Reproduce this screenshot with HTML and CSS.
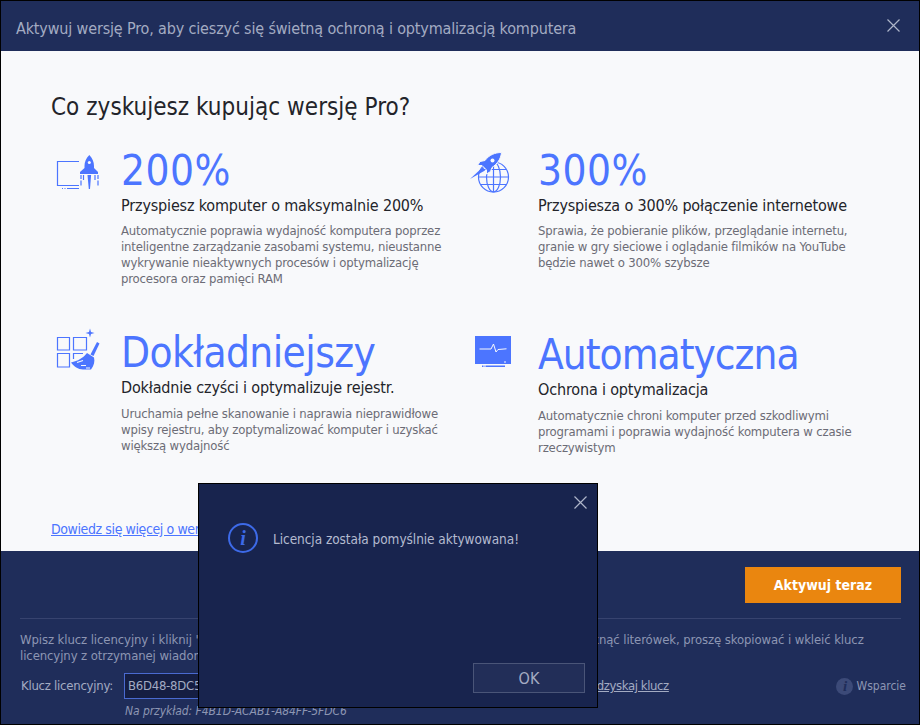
FILE: index.html
```html
<!DOCTYPE html>
<html lang="pl">
<head>
    <meta charset="UTF-8">
    <meta name="viewport" content="width=device-width, initial-scale=1.0">
    <title>Aktywuj wersję Pro</title>
    <link rel="stylesheet" href="styles.css">
</head>
<body>
    <div class="window">
        <div class="titlebar">
            <span class="title">Aktywuj wersję Pro, aby cieszyć się świetną ochroną i optymalizacją komputera</span>
            <svg class="close-icon" width="13" height="13" viewBox="0 0 13 13"><path d="M.5.5l12 12M12.5.5l-12 12"/></svg>
        </div>

        <div class="content">
            <h1>Co zyskujesz kupując wersję Pro?</h1>
            <div class="features">
                <div class="feature">
                    <svg class="feature-icon" width="48" height="50" viewBox="0 0 48 50">
                        <path class="line" d="M26 17.5H4.5v24H26"/>
                        <path class="fill" d="M9 44h1v1H9zM11.5 44h1v1h-1zM14 44h12v1H14z"/>
                        <path class="fill" d="M36.3 11c-3.300 3-4.800 7-4.800 11v2L27 28v2h18v-2l-4-4v-2c0-4-1.500-8-4.700-11z"/>
                        <circle class="hole" cx="36.300" cy="18.500" r="1.500"/>
                        <path class="fill" d="M34.500 31h3.600L37 45h-1.200z"/>
                        <path class="line" d="M28 31v4M28 36.500v5M45 31v4M45 36.500v5M30.500 31v5M42 31v5"/>
                    </svg>
                    <div class="feature-text">
                        <div class="big big-num">200%</div>
                        <h3>Przyspiesz komputer o maksymalnie 200%</h3>
                        <p>Automatycznie poprawia wydajność komputera poprzez<br>inteligentne zarządzanie zasobami systemu, nieustanne<br>wykrywanie nieaktywnych procesów i optymalizację<br>procesora oraz pamięci RAM</p>
                    </div>
                </div>
                <div class="feature">
                    <svg class="feature-icon" width="48" height="50" viewBox="0 0 48 50">
                        <circle class="line" cx="23.500" cy="33" r="15"/>
                        <ellipse class="line" cx="23.500" cy="33" rx="7" ry="15"/>
                        <path class="line" d="M23.500 18v30M8.500 33h30M11 25.500h25M11 40.500h25"/>
                        <path class="fill halo" d="M31.500 8.500C25 8.500 19 11 15 16.500l-5 1-2.500 4H12l4.500 4.500v4l4-2.500 1.500-4c5-3.500 9-8.500 9.500-15z"/>
                        <circle class="hole" cx="22.500" cy="16.500" r="2"/>
                        <path class="fill" d="M13 23L0 35l15-8.500z"/>
                    </svg>
                    <div class="feature-text">
                        <div class="big big-num">300%</div>
                        <h3>Przyspiesza o 300% połączenie internetowe</h3>
                        <p>Sprawia, że pobieranie plików, przeglądanie internetu,<br>granie w gry sieciowe i oglądanie filmików na YouTube<br>będzie nawet o 300% szybsze</p>
                    </div>
                </div>
                <div class="feature feature-lower">
                    <svg class="feature-icon icon-low" width="48" height="50" viewBox="0 0 48 50">
                        <path class="line" d="M4.500 10.500h12V23h-12zM20.500 10.500h13V23h-13zM4.500 26.500h12V40h-12zM20.500 32v-5.500H30"/>
                        <path class="fill" d="M37 1.500l1 3.500 3.500 1-3.500 1-1 3.500-1-3.500-3.500-1 3.500-1z"/>
                        <path class="fill" d="M44 15l2.500 1.500-6 12.500-3-1.500z"/>
                        <path class="fill" d="M34 26c-4 5-9 8-16 9.500 3 4 7 7 12 7h8c3-4 4-8 3-12z"/>
                        <path class="cut" d="M24 35.500l6-2M28 38.500h5M33 41h4"/>
                    </svg>
                    <div class="feature-text">
                        <div class="big">Dokładniejszy</div>
                        <h3>Dokładnie czyści i optymalizuje rejestr.</h3>
                        <p>Uruchamia pełne skanowanie i naprawia nieprawidłowe<br>wpisy rejestru, aby zoptymalizować komputer i uzyskać<br>większą wydajność</p>
                    </div>
                </div>
                <div class="feature feature-lower feature-low">
                    <svg class="feature-icon icon-low" width="48" height="50" viewBox="0 0 48 50">
                        <rect class="fill" x="5" y="7" width="36" height="28"/>
                        <path class="cut thin" d="M9.500 20H21l2.500-5 2.500 8 2-2.500 8.500-.7"/>
                        <path class="cut" d="M34 33h2"/>
                        <path class="fill" d="M12 36.500h1v1.500h-1zM13.500 36.500h1v1.500h-1zM15.500 36.500H35v1.500H15.500z"/>
                    </svg>
                    <div class="feature-text">
                        <div class="big big-tight">Automatyczna</div>
                        <h3>Ochrona i optymalizacja</h3>
                        <p>Automatycznie chroni komputer przed szkodliwymi<br>programami i poprawia wydajność komputera w czasie<br>rzeczywistym</p>
                    </div>
                </div>
            </div>
            <a class="more-link" href="#">Dowiedz się więcej o wersji Pro</a>
        </div>

        <div class="footer">
            <div class="buy-row">
                <button class="buy-btn">Aktywuj teraz</button>
            </div>
            <div class="license">
                <p class="license-info">Wpisz klucz licencyjny i kliknij "Aktywuj", aby zarejestrować pełną wersję programu. Aby łatwiej uniknąć literówek, proszę skopiować i wkleić klucz<br>licencyjny z otrzymanej wiadomości e-mail</p>
                <div class="key-row">
                    <label class="key-label">Klucz licencyjny:</label>
                    <div class="key-col">
                        <div class="key-input">B6D48-8DC5F-A1B2C-77E3D-90FA4</div>
                        <div class="key-example">Na przykład: F4B1D-ACAB1-A84FF-5FDC6</div>
                    </div>
                    <a class="recover-link" href="#">Odzyskaj klucz</a>
                    <div class="support">
                        <span class="support-icon">i</span>
                        <span>Wsparcie</span>
                    </div>
                </div>
            </div>
        </div>

        <div class="dialog">
            <div class="dialog-top">
                <svg class="close-icon" width="13" height="13" viewBox="0 0 13 13"><path d="M.5.5l12 12M12.5.5l-12 12"/></svg>
            </div>
            <div class="dialog-body">
                <span class="info-icon">i</span>
                <span class="dialog-text">Licencja została pomyślnie aktywowana!</span>
            </div>
            <div class="dialog-actions">
                <button class="ok-btn">OK</button>
            </div>
        </div>
    </div>
</body>
</html>
```

FILE: styles.css
```css
* {
    box-sizing: border-box;
}
body {
    margin: 0;
    font-family: "DejaVu Sans", sans-serif;
    font-stretch: condensed;
}
.window {
    position: relative;
    width: 920px;
    height: 725px;
    border: 1px solid #000;
    display: flex;
    flex-direction: column;
    background-color: #f8f9fb;
}
.titlebar {
    height: 50px;
    flex-shrink: 0;
    padding: 0 19px 0 15px;
    display: flex;
    justify-content: space-between;
    background-color: #1f2d5a;
}
.title {
    margin-top: 18px;
    font-size: 16px;
    line-height: 20px;
    letter-spacing: -.156px;
    color: #a3abc2;
}
.close-icon {
    margin-top: 18px;
    fill: none;
    stroke: #aeb5c9;
    stroke-width: 1.2;
}
.content {
    flex: 1;
    padding: 41px 0 0 50px;
    display: flex;
    flex-direction: column;
}
h1 {
    margin: 0;
    font-size: 24px;
    line-height: 30px;
    font-weight: normal;
    letter-spacing: .03px;
    color: #23242a;
}
.features {
    margin-top: 22px;
    display: grid;
    grid-template-columns: 417px 417px;
    grid-template-rows: 182px auto;
}
.feature {
    display: flex;
    align-items: flex-start;
}
.feature-low {
    margin-top: 2px;
}
.feature-icon {
    margin-left: 2px;
    width: 48px;
    margin-right: 20px;
    flex-shrink: 0;
}
.icon-low {
    margin-top: 1px;
}
.line {
    fill: none;
    stroke: #4c75ff;
    stroke-width: 1.2;
}
.fill {
    fill: #4c75ff;
}
.halo {
    stroke: #f8f9fb;
    stroke-width: 1;
}
.hole {
    fill: #f8f9fb;
}
.cut {
    fill: none;
    stroke: #f8f9fb;
    stroke-width: 1.2;
}
.thin {
    stroke-width: 1;
}
.big {
    padding-top: 2px;
    font-size: 42px;
    line-height: 50px;
    letter-spacing: -.6px;
    color: #4c75ff;
}
.big-num {
    letter-spacing: .5px;
}
.big-tight {
    letter-spacing: -1px;
}
h3 {
    margin: 0;
    font-size: 16px;
    line-height: 20px;
    font-weight: normal;
    letter-spacing: -.16px;
    color: #23242a;
}
.feature-text p {
    margin: 7px 0 0;
    font-size: 13px;
    line-height: 16px;
    letter-spacing: -.17px;
    color: #6c6c76;
}
.feature-lower .feature-text p {
    margin-top: 8px;
}
.more-link {
    margin-top: auto;
    margin-bottom: 13px;
    font-size: 14px;
    line-height: 18px;
    letter-spacing: -.4px;
    color: #4c75ff;
}
.footer {
    height: 173px;
    flex-shrink: 0;
    padding: 16px 18px 0 19px;
    background-color: #1f2d5a;
}
.buy-row {
    display: flex;
    justify-content: flex-end;
    padding-bottom: 15px;
    border-bottom: 1px solid #37436f;
}
.buy-btn {
    width: 156px;
    height: 36px;
    border: none;
    background-color: #ea860f;
    color: #fff;
    font-family: inherit;
    font-stretch: condensed;
    font-size: 14px;
    font-weight: bold;
}
.license-info {
    margin: 13px 0 0;
    font-size: 13px;
    line-height: 16px;
    letter-spacing: -.1px;
    color: #8d96b3;
}
.key-row {
    margin-top: 9px;
    display: flex;
    align-items: flex-start;
}
.key-label {
    width: 104px;
    padding: 5px 0 0 1px;
    font-size: 13px;
    line-height: 16px;
    letter-spacing: -.25px;
    color: #a3abc2;
}
.key-col {
    width: 464px;
}
.key-input {
    height: 26px;
    padding-left: 3px;
    border: 1px solid #4a6ad0;
    background-color: #151e42;
    font-size: 13px;
    line-height: 24px;
    letter-spacing: -.25px;
    color: #a3abc2;
}
.key-example {
    margin-top: 4px;
    padding-left: 1px;
    font-size: 12px;
    line-height: 16px;
    letter-spacing: -.06px;
    font-style: italic;
    color: #8d96b3;
}
.recover-link {
    margin-top: 5px;
    font-size: 13px;
    line-height: 16px;
    letter-spacing: -.4px;
    color: #a3abc2;
}
.support {
    margin-left: auto;
    margin-right: -5px;
    display: flex;
    align-items: center;
    gap: 3px;
    margin-top: 4px;
    font-size: 12px;
    line-height: 18px;
    color: #8d96b3;
}
.support-icon {
    width: 17px;
    height: 17px;
    border-radius: 50%;
    background-color: #3c4a78;
    color: #1f2d5a;
    font-family: "Liberation Serif", serif;
    font-style: italic;
    font-weight: bold;
    font-size: 15px;
    line-height: 17px;
    text-align: center;
}
/* message box on top of the window */
.dialog {
    position: absolute;
    left: 197px;
    top: 482px;
    width: 400px;
    height: 225px;
    border: 1px solid #000;
    display: flex;
    flex-direction: column;
    background-color: #18244e;
}
.dialog-top {
    height: 30px;
    padding-right: 10px;
    display: flex;
    justify-content: flex-end;
}
.dialog-top .close-icon {
    margin-top: 12px;
}
.dialog-body {
    padding-left: 29px;
    margin-top: 9px;
    display: flex;
    align-items: center;
    gap: 15px;
}
.info-icon {
    width: 30px;
    height: 30px;
    border: 2px solid #3d6ae8;
    border-radius: 50%;
    color: #3d6ae8;
    font-family: "Liberation Serif", serif;
    font-style: italic;
    font-weight: bold;
    font-size: 20px;
    line-height: 26px;
    text-align: center;
}
.dialog-text {
    margin-top: 2px;
    font-size: 13.500px;
    letter-spacing: -.05px;
    color: #b4bbd0;
}
.dialog-actions {
    margin-top: auto;
    padding: 0 12px 14px 0;
    display: flex;
    justify-content: flex-end;
}
.ok-btn {
    width: 112px;
    height: 30px;
    border: 1px solid #4a5578;
    background-color: #222e58;
    color: #a3abc2;
    font-family: inherit;
    font-stretch: condensed;
    font-size: 16px;
}
```
